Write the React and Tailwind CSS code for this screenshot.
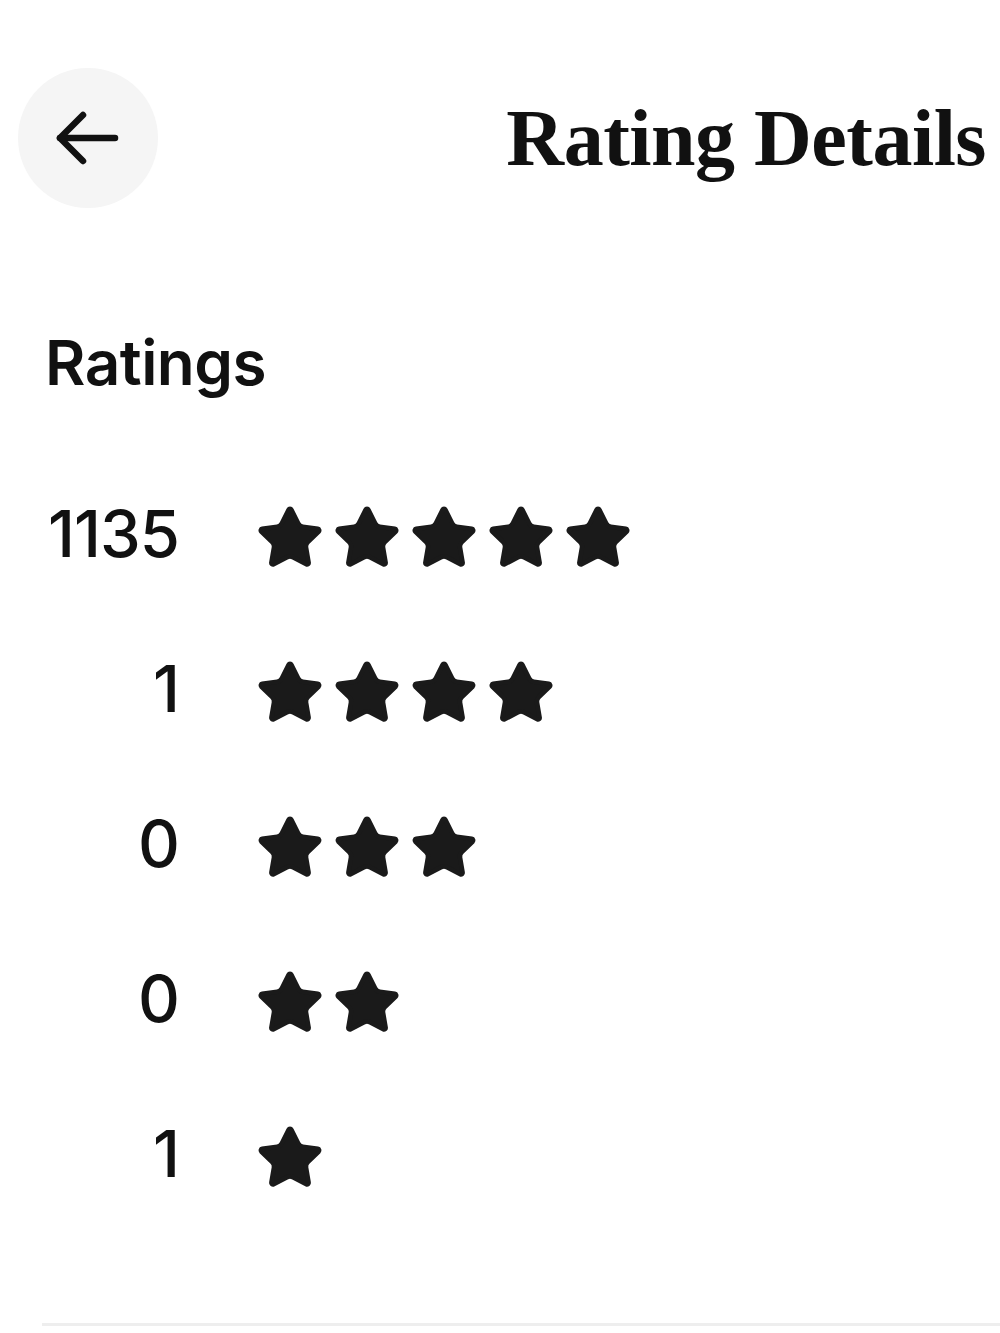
import { Star } from 'lucide-react';

const rows = [
  { count: 1135, stars: 5 },
  { count: 1, stars: 4 },
  { count: 0, stars: 3 },
  { count: 0, stars: 2 },
  { count: 1, stars: 1 },
];

function BackArrow() {
  return (
    <svg width="64" height="56" viewBox="0 0 64 56" fill="none" stroke="#111" strokeWidth="6.5" strokeLinecap="round" strokeLinejoin="round">
      <path d="M60 28H5" />
      <path d="M28 5L5 28L28 51" />
    </svg>
  );
}

function App() {
  return (
    <div className="min-h-screen bg-white text-[#111] font-['Inter',sans-serif]">
      {/* header */}
      <div className="flex items-center justify-between pt-[68px] pl-[18px] pr-[14px]">
        <button className="w-[140px] h-[140px] rounded-full bg-[#f5f5f5] flex items-center justify-center">
          <span className="mr-[2px]"><BackArrow /></span>
        </button>
        <h1 className="font-['Liberation_Serif',serif] text-[80px] leading-none font-bold tracking-[-0.5px]">
          Rating Details
        </h1>
      </div>

      <div className="pl-[45px] pt-[124px]">
        <h2 className="text-[62px] leading-none font-semibold tracking-[-0.5px]">Ratings</h2>

        <div className="mt-[62px] flex flex-col">
          {rows.map((r, i) => (
            <div key={i} className="h-[155px] flex items-center">
              <span className="w-[134px] text-right text-[65px] leading-none font-medium tracking-[-1px]">{r.count}</span>
              <div className="ml-[76px] mt-[8px] flex items-center gap-[7px]">
                {Array.from({ length: r.stars }).map((_, j) => (
                  <Star key={j} size={70} fill="#1a1a1a" stroke="#1a1a1a" strokeWidth={1.6} />
                ))}
              </div>
            </div>
          ))}
        </div>
      </div>

      <div className="ml-[42px] mt-[92px] h-[3px] bg-[#eeeeee]" />
    </div>
  );
}

export default App;
